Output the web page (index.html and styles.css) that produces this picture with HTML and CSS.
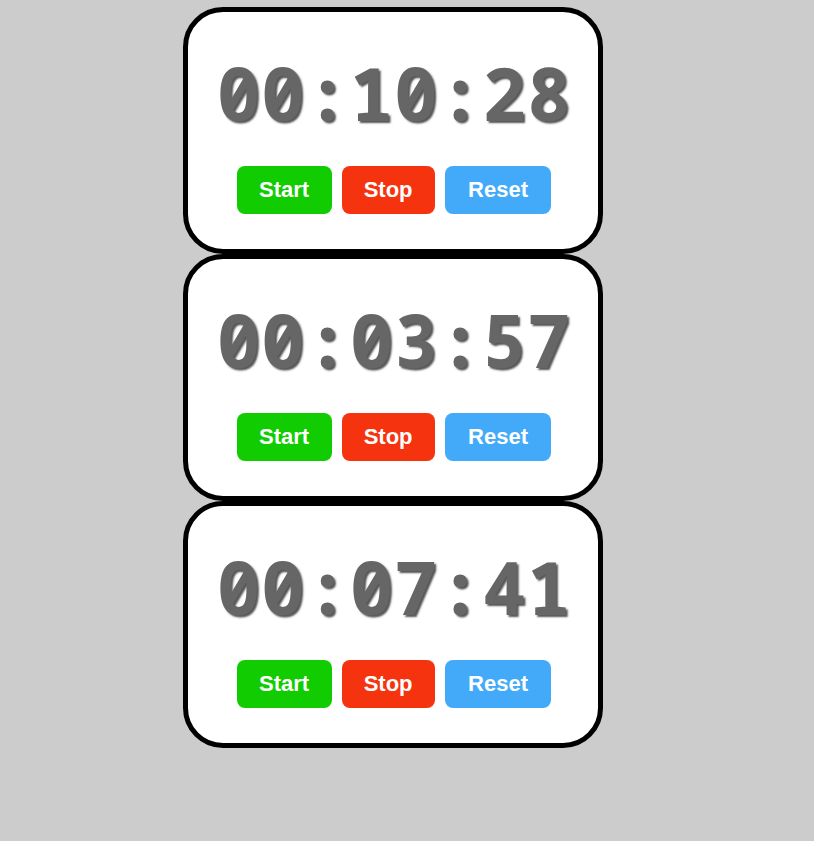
FILE: index.html
```html
<!DOCTYPE html>
<html>
<head>
<meta charset="utf-8">
<link rel="stylesheet" href="styles.css">
</head>
<body>
<div class="stack">
  <div class="card">
    <div class="time">00:10:28</div>
    <div class="buttons">
      <button class="btn start">Start</button>
      <button class="btn stop">Stop</button>
      <button class="btn reset">Reset</button>
    </div>
  </div>
  <div class="card">
    <div class="time">00:03:57</div>
    <div class="buttons">
      <button class="btn start">Start</button>
      <button class="btn stop">Stop</button>
      <button class="btn reset">Reset</button>
    </div>
  </div>
  <div class="card">
    <div class="time">00:07:41</div>
    <div class="buttons">
      <button class="btn start">Start</button>
      <button class="btn stop">Stop</button>
      <button class="btn reset">Reset</button>
    </div>
  </div>
</div>
</body>
</html>
```
FILE: styles.css
```css
html, body {
  margin: 0;
  padding: 0;
  background: #cccccc;
}
body {
  padding-top: 7px;
  min-height: 841px;
  box-sizing: border-box;
}
.stack {
  display: flex;
  flex-direction: column;
  margin-left: 183px;
  width: 420px;
}
.card {
  box-sizing: border-box;
  width: 420px;
  height: 247px;
  border: 5px solid #000;
  border-radius: 40px;
  background: #fff;
  display: flex;
  flex-direction: column;
  align-items: center;
  padding-top: 39px;
  padding-left: 2px;
}
.time {
  font-family: "Noto Sans Mono", "DejaVu Sans Mono", monospace;
  font-weight: bold;
  font-size: 73px;
  line-height: 84px;
  letter-spacing: 0.5px;
  color: #666666;
  text-shadow: 2px 2px 2px #555;
}
.buttons {
  display: flex;
  gap: 10px;
  margin-top: 31px;
}
.btn {
  font-family: "Liberation Sans", Arial, sans-serif;
  font-weight: bold;
  font-size: 22px;
  color: #fff;
  border: none;
  border-radius: 8px;
  height: 48px;
  padding: 0 22px;
  cursor: pointer;
}
.start { background: #11cc00; padding: 0 22.5px; }
.stop { background: #f5330f; }
.reset { background: #42aaf8; padding: 0 23.5px; }
```
